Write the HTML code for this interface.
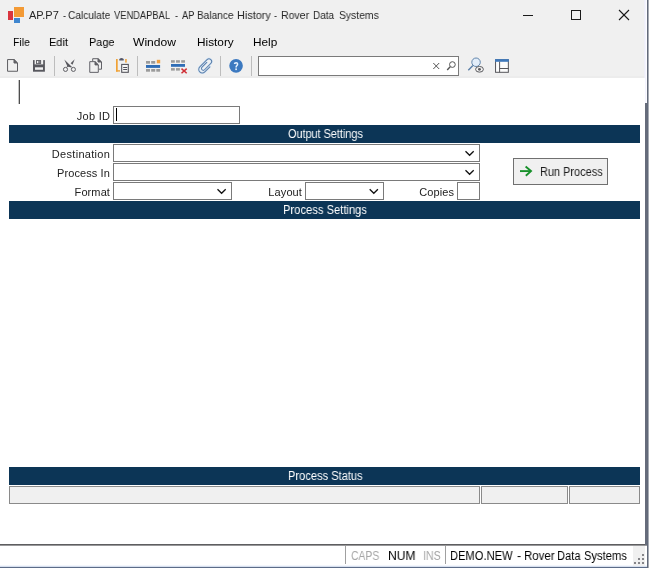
<!DOCTYPE html>
<html>
<head>
<meta charset="utf-8">
<title>AP.P7</title>
<style>
html,body{margin:0;padding:0;}
body{width:649px;height:568px;overflow:hidden;position:relative;background:#f0f0f0;font-family:"Liberation Sans",sans-serif;color:#000;}
.abs{position:absolute;}
.t{will-change:transform;position:absolute;white-space:pre;transform-origin:0 0;line-height:14px;height:14px;}
.ttl{font-size:11.5px;color:#111;}
.mn{font-size:12px;color:#000;}
.lb{font-size:11px;color:#222;text-align:right;width:110px;left:0;letter-spacing:0.1px;}
.bar{position:absolute;left:9px;width:631px;height:18px;background:#0c3556;color:#fff;font-size:11px;text-align:center;line-height:17px;}
.inp{position:absolute;box-sizing:border-box;border:1px solid #7a7a7a;background:#fff;height:18px;}
.sep{position:absolute;width:1px;background:#bdbdbd;top:56px;height:20px;}
.sb{font-size:12px;}
svg{position:absolute;overflow:visible;}
</style>
</head>
<body>
<div class="abs" style="left:0;top:76px;width:645px;height:2px;background:#ececec;"></div>
<!-- content area -->
<div class="abs" style="left:0;top:78px;width:645px;height:466px;background:#fff;"></div>
<!-- status bar -->
<div class="abs" style="left:0;top:544px;width:647px;height:1px;background:#5e5e60;"></div>
<div class="abs" style="left:0;top:545px;width:647px;height:1px;background:#98989a;"></div>
<div class="abs" style="left:0;top:546px;width:647px;height:20px;background:#fff;"></div>
<div class="abs" style="left:0;top:565px;width:647px;height:1px;background:#f3f6fc;"></div>
<div class="abs" style="left:0;top:566px;width:649px;height:1px;background:#d6dfee;"></div>
<div class="abs" style="left:0;top:567px;width:649px;height:1px;background:#5c6c88;"></div>
<!-- right edge -->
<div class="abs" style="left:644px;top:0;width:1px;height:78px;background:#efeff8;"></div>
<div class="abs" style="left:645px;top:0;width:1px;height:103px;background:#f3f3ff;"></div>
<div class="abs" style="left:646px;top:0;width:1px;height:103px;background:#fcfcff;"></div>
<div class="abs" style="left:647px;top:0;width:1px;height:568px;background:#626a7a;"></div>
<div class="abs" style="left:648px;top:0;width:1px;height:568px;background:#a8acb4;"></div>
<div class="abs" style="left:645px;top:103px;width:2px;height:442px;background:#666c7b;"></div>

<!-- title bar -->
<div class="abs" style="left:8px;top:11px;width:5px;height:9px;background:#d9353f;"></div>
<div class="abs" style="left:14px;top:7px;width:10px;height:10px;background:#f39a35;"></div>
<div class="abs" style="left:14px;top:18px;width:6px;height:5px;background:#3f86cf;"></div>
<svg style="left:0;top:0;" width="649" height="30" viewBox="0 0 649 30">
 <g stroke="#1a1a1a" stroke-width="1" fill="none" shape-rendering="crispEdges">
  <line x1="523" y1="15.5" x2="533" y2="15.5"/>
  <rect x="571.5" y="10.5" width="9" height="9"/>
 </g>
 <g stroke="#1a1a1a" stroke-width="1.1" fill="none">
  <line x1="619" y1="10" x2="629" y2="20"/>
  <line x1="629" y1="10" x2="619" y2="20"/>
 </g>
</svg>


<!-- toolbar -->
<div class="sep" style="left:54px;"></div>
<div class="sep" style="left:137px;"></div>
<div class="sep" style="left:220px;"></div>
<div class="sep" style="left:251px;"></div>
<div class="inp" style="left:258px;top:56px;width:201px;height:20px;"></div>
<svg id="tb" style="left:0;top:54px;" width="649" height="24" viewBox="0 54 649 24">
 <!-- new -->
 <g stroke="#5e5e62" stroke-width="1" fill="none">
  <path d="M7.55 59.55H14L17.5 63V71.25H7.55Z"/>
  <path d="M14 59.55V63H17.5Z" fill="#6a6a6e"/>
 </g>
 <!-- save -->
 <rect x="33" y="60.1" width="11.9" height="11.6" fill="#58585e"/>
 <rect x="34.6" y="60" width="8.6" height="4.4" fill="#f0f0f0"/>
 <rect x="36" y="60.1" width="5.1" height="3.8" fill="#58585e"/>
 <rect x="36.9" y="61" width="1.5" height="2.1" fill="#efefef"/>
 <rect x="39.2" y="61" width="1.2" height="2.1" fill="#85858a"/>
 <rect x="35" y="67.3" width="8" height="2.5" fill="#f0f0f0"/>
 <!-- cut -->
 <g fill="#58585e" stroke="none">
  <path d="M64.3 59.5L72 66.9L71.3 67.6L67.4 66.6L66.8 64.9Z"/>
  <path d="M74.7 59.3L70.6 63.2L72.5 64.7Z"/>
  <path d="M69.6 65.4L67 67.4L66.6 66.8L69 64.8Z"/>
 </g>
 <g stroke="#58585e" stroke-width="0.95" fill="none">
  <circle cx="65.5" cy="69.4" r="2.05"/>
  <circle cx="73.4" cy="69.4" r="2.05"/>
 </g>
 <!-- copy -->
 <g stroke="#5a5a60" stroke-width="0.95" fill="none">
  <path d="M92.7 61.2V58.7H98L101.5 62V69.2H98.8"/>
  <path d="M98 58.7V62H101.5Z" fill="#6a6a6e"/>
  <path d="M89.75 61.65H95L98.3 64.9V72.35H89.75Z"/>
  <path d="M95 61.65V64.9H98.3Z" fill="#6a6a6e"/>
 </g>
 <!-- paste -->
 <g fill="#f0a236">
  <rect x="116" y="59" width="1.7" height="12.6"/>
  <rect x="116" y="70.2" width="4" height="1.4"/>
  <rect x="125.2" y="59" width="1.5" height="3.6"/>
 </g>
 <path d="M119.3 60.6V59.6Q119.3 58 121.5 58Q123.7 58 123.7 59.6V60.6Z" fill="#55586a"/>
 <rect x="121.7" y="64.4" width="6.6" height="7.9" fill="#f6f6f6" stroke="#505058" stroke-width="1.05"/>
 <g stroke="#505058" stroke-width="1">
  <line x1="123.2" y1="67.5" x2="127.2" y2="67.5"/>
  <line x1="123.2" y1="69.5" x2="127.2" y2="69.5"/>
 </g>
 <!-- insert row -->
 <g fill="#9b9b9b">
  <rect x="146" y="61" width="4" height="2.7"/>
  <rect x="151.2" y="61" width="4" height="2.7"/>
  <rect x="146" y="69" width="4" height="2.7"/>
  <rect x="151.2" y="69" width="4" height="2.7"/>
  <rect x="156.3" y="69" width="3.8" height="2.7"/>
 </g>
 <rect x="156.8" y="59.8" width="3.4" height="3.5" fill="#f0a040"/>
 <rect x="146" y="65" width="14.1" height="2.9" fill="#2f6db6"/>
 <!-- delete row -->
 <g fill="#9b9b9b">
  <rect x="171" y="60.2" width="3.8" height="2.5"/>
  <rect x="176" y="60.2" width="3.9" height="2.5"/>
  <rect x="181.2" y="60.2" width="3.8" height="2.5"/>
  <rect x="171" y="68.1" width="3.8" height="2.5"/>
  <rect x="176" y="68.1" width="3.9" height="2.5"/>
 </g>
 <rect x="171" y="64" width="14" height="2.8" fill="#2f6db6"/>
 <g stroke="#cf2f36" stroke-width="1.5" fill="none">
  <line x1="181.5" y1="68.6" x2="186.7" y2="73.2"/>
  <line x1="186.7" y1="68.6" x2="181.5" y2="73.2"/>
 </g>
 <!-- paperclip -->
 <g transform="translate(196.3 69.8) rotate(-45) translate(9.2 3.95) scale(0.9) translate(-9.2 -3.95)" fill="none" stroke-linecap="round">
  <path d="M12 7.9L4 7.9A3.95 3.95 0 0 1 4 0L15.4 0A3 3 0 0 1 15.4 6L5.5 6A2 2 0 0 1 5.5 2L13 2" stroke="#d8e8f8" stroke-width="2.4"/>
  <path d="M12 7.9L4 7.9A3.95 3.95 0 0 1 4 0L15.4 0A3 3 0 0 1 15.4 6L5.5 6A2 2 0 0 1 5.5 2L13 2" stroke="#5b7ea8" stroke-width="1.05"/>
 </g>
 <!-- help -->
 <circle cx="236.05" cy="65.85" r="6.8" fill="#3c79c0"/>
 <path d="M234.5 64Q234.5 62.8 236.1 62.8Q237.6 62.8 237.6 64.1Q237.6 65 236.8 65.6Q236.1 66.1 236.1 67.4" fill="none" stroke="#e6f2ff" stroke-width="1.5"/>
 <rect x="235.3" y="68.4" width="1.6" height="1.7" fill="#e6f2ff"/>
 <!-- search box icons -->
 <g stroke="#555" stroke-width="1" fill="none">
  <line x1="433.3" y1="63" x2="439.2" y2="69"/>
  <line x1="439.2" y1="63" x2="433.3" y2="69"/>
  <circle cx="452.4" cy="64.55" r="2.85"/>
  <line x1="450.2" y1="66.8" x2="447.2" y2="70" stroke-width="1.4"/>
 </g>
 <!-- search eye -->
 <g stroke="#5b7fa8" fill="none">
  <circle cx="476.05" cy="62.25" r="4.25" stroke-width="0.95" fill="#e2edf9"/>
  <line x1="472.9" y1="65.5" x2="468.3" y2="70.2" stroke-width="1.4"/>
 </g>
 <ellipse cx="479.5" cy="69.3" rx="3.9" ry="2.85" fill="#f2f2f2" stroke="#5c5c60" stroke-width="1"/>
 <circle cx="479.45" cy="69.35" r="1.45" fill="#5c5c60"/>
 <!-- layout -->
 <rect x="495.55" y="59.8" width="12.8" height="12.5" fill="#fcfcfc" stroke="#55555a" stroke-width="1"/>
 <rect x="495.05" y="59.1" width="13.8" height="2.7" fill="#3f78ba"/>
 <g stroke="#55555a" stroke-width="1">
  <line x1="499.6" y1="61.7" x2="499.6" y2="72.3"/>
  <line x1="499.6" y1="68.5" x2="508.7" y2="68.5" stroke-width="1"/>
 </g>
</svg>

<!-- form -->
<div class="abs" style="left:18px;top:80px;width:1px;height:24px;background:#c4c4c4;"></div>
<div class="abs" style="left:19px;top:80px;width:1px;height:24px;background:#4e4e4e;"></div>
<span class="t lb" style="top:109px;letter-spacing:0.3px;width:110.3px;">Job ID</span>
<div class="inp" style="left:113px;top:106px;width:127px;"></div>
<div class="abs" style="left:116px;top:108px;width:1px;height:13px;background:#000;"></div>
<div class="bar" style="top:125px;"></div>
<span class="t lb" style="top:147px;letter-spacing:0.3px;width:110.2px;">Destination</span>
<div class="inp" style="left:113px;top:144px;width:367px;"></div>
<span class="t lb" style="top:166px;">Process In</span>
<div class="inp" style="left:113px;top:163px;width:367px;"></div>
<span class="t lb" style="top:185px;">Format</span>
<div class="inp" style="left:113px;top:182px;width:119px;"></div>
<span class="t lb" style="top:185px;width:302px;">Layout</span>
<div class="inp" style="left:305px;top:182px;width:79px;"></div>
<span class="t lb" style="top:185px;width:454px;">Copies</span>
<div class="inp" style="left:457px;top:182px;width:23px;"></div>
<div class="bar" style="top:201px;"></div>

<!-- run process button -->
<div class="abs" style="left:513px;top:158px;width:95px;height:27px;box-sizing:border-box;border:1px solid #707070;background:#f0f0f0;"></div>

<!-- process status -->
<div class="bar" style="top:467px;"></div>
<div class="inp" style="left:9px;top:486px;width:471px;background:#f0f0f0;border-color:#8a8a8a;"></div>
<div class="inp" style="left:481px;top:486px;width:87px;background:#f0f0f0;border-color:#8a8a8a;"></div>
<div class="inp" style="left:569px;top:486px;width:71px;background:#f0f0f0;border-color:#8a8a8a;"></div>

<!-- texts -->
<span class="t" style="left:28.80px;top:8.10px;font-size:11px;color:#262626;transform:scaleX(0.9849);">AP.P7</span>
<span class="t" style="left:62.60px;top:8.10px;font-size:11px;color:#262626;transform:scaleX(0.8500);">-</span>
<span class="t" style="left:67.70px;top:8.10px;font-size:11px;color:#262626;transform:scaleX(0.9226);">Calculate</span>
<span class="t" style="left:114.30px;top:8.10px;font-size:11px;color:#262626;transform:scaleX(0.8481);">VENDAPBAL</span>
<span class="t" style="left:174.80px;top:8.10px;font-size:11px;color:#262626;transform:scaleX(0.8500);">-</span>
<span class="t" style="left:182.00px;top:8.10px;font-size:11px;color:#262626;transform:scaleX(0.8510);">AP</span>
<span class="t" style="left:197.40px;top:8.10px;font-size:11px;color:#262626;transform:scaleX(0.9159);">Balance</span>
<span class="t" style="left:236.60px;top:8.10px;font-size:11px;color:#262626;transform:scaleX(0.9849);">History</span>
<span class="t" style="left:274.40px;top:8.10px;font-size:11px;color:#262626;transform:scaleX(0.8500);">-</span>
<span class="t" style="left:281.40px;top:8.10px;font-size:11px;color:#262626;transform:scaleX(0.9569);">Rover</span>
<span class="t" style="left:313.30px;top:8.10px;font-size:11px;color:#262626;transform:scaleX(0.9080);">Data</span>
<span class="t" style="left:339.00px;top:8.10px;font-size:11px;color:#262626;transform:scaleX(0.9420);">Systems</span>
<span class="t" style="left:12.70px;top:35.00px;font-size:11.8px;color:#000;transform:scaleX(0.8896);">File</span>
<span class="t" style="left:49.20px;top:35.00px;font-size:11.8px;color:#000;transform:scaleX(0.9359);">Edit</span>
<span class="t" style="left:88.50px;top:35.00px;font-size:11.8px;color:#000;transform:scaleX(0.9253);">Page</span>
<span class="t" style="left:133.40px;top:35.00px;font-size:11.8px;color:#000;transform:scaleX(1.0250);">Window</span>
<span class="t" style="left:197.00px;top:35.00px;font-size:11.8px;color:#000;transform:scaleX(0.9971);">History</span>
<span class="t" style="left:253.30px;top:35.00px;font-size:11.8px;color:#000;transform:scaleX(0.9878);">Help</span>
<span class="t" style="left:351.00px;top:549.00px;font-size:12.5px;color:#a6a6a6;transform:scaleX(0.8308);">CAPS</span>
<span class="t" style="left:388.23px;top:549.00px;font-size:12.5px;color:#000;transform:scaleX(0.9684);">NUM</span>
<span class="t" style="left:423.35px;top:549.00px;font-size:12.5px;color:#a6a6a6;transform:scaleX(0.8513);">INS</span>
<span class="t" style="left:450.01px;top:549.00px;font-size:12.5px;color:#000;transform:scaleX(0.8927);">DEMO.NEW</span>
<span class="t" style="left:516.60px;top:549.00px;font-size:12.5px;color:#000;transform:scaleX(0.9750);">-</span>
<span class="t" style="left:523.58px;top:549.00px;font-size:12.5px;color:#000;transform:scaleX(0.9167);">Rover</span>
<span class="t" style="left:556.71px;top:549.00px;font-size:12.5px;color:#000;transform:scaleX(0.8919);">Data</span>
<span class="t" style="left:584.10px;top:549.00px;font-size:12.5px;color:#000;transform:scaleX(0.8936);">Systems</span>
<span class="t" style="left:287.60px;top:127.00px;font-size:12.5px;color:#fff;transform:scaleX(0.8683);">Output Settings</span>
<span class="t" style="left:282.71px;top:203.20px;font-size:12.5px;color:#fff;transform:scaleX(0.8947);">Process Settings</span>
<span class="t" style="left:287.71px;top:469.00px;font-size:12.5px;color:#fff;transform:scaleX(0.8875);">Process Status</span>
<span class="t" style="left:539.70px;top:164.80px;font-size:12px;color:#1c1c1c;transform:scaleX(0.9127);">Run Process</span>
<!-- status bar contents -->
<div class="abs" style="left:345px;top:546px;width:1px;height:18px;background:#a0a0a0;"></div>
<div class="abs" style="left:445px;top:546px;width:1px;height:18px;background:#a0a0a0;"></div>
<div class="abs" style="left:633px;top:546px;width:12px;height:20px;background:#f0f0f0;"></div>
<svg style="left:0;top:0;" width="649" height="568" viewBox="0 0 649 568">
 <g stroke="#111" stroke-width="1.3" fill="none">
  <path d="M465.5 151.3L469.6 155.3L473.7 151.3"/>
  <path d="M465.5 170.3L469.6 174.3L473.7 170.3"/>
  <path d="M217.5 189.3L221.6 193.3L225.7 189.3"/>
  <path d="M369.7 189.3L373.8 193.3L377.9 189.3"/>
 </g>
 <g stroke="#17902a" fill="none" stroke-width="1.9">
  <line x1="520" y1="171.1" x2="530.5" y2="171.1"/>
  <path d="M525.6 166.6L531 171.1L525.8 175.8" stroke-linejoin="miter"/>
 </g>
 <g fill="#858589">
  <rect x="642" y="554" width="2" height="2"/>
  <rect x="638" y="558" width="2" height="2"/>
  <rect x="642" y="558" width="2" height="2"/>
  <rect x="634" y="562" width="2" height="2"/>
  <rect x="638" y="562" width="2" height="2"/>
  <rect x="642" y="562" width="2" height="2"/>
 </g>
</svg>
</body>
</html>
